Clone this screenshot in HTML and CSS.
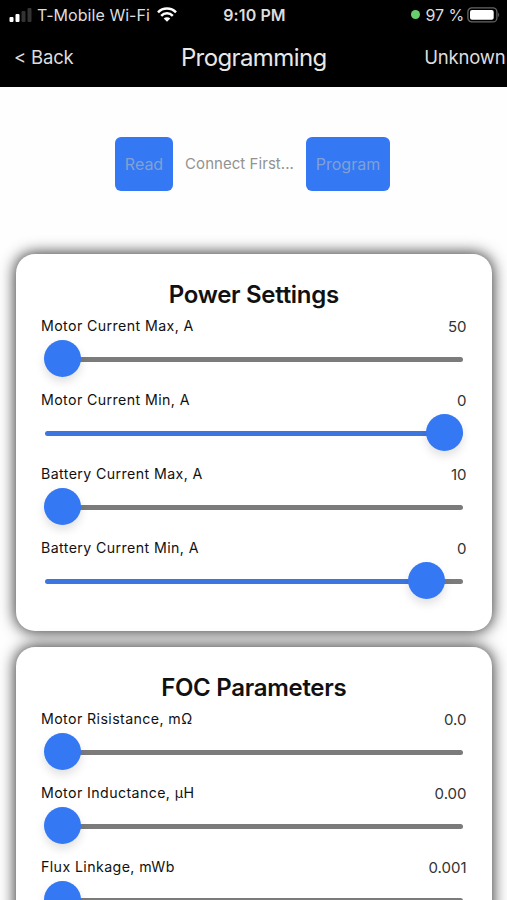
FILE: index.html
```html
<!DOCTYPE html>
<html lang="en">
<head>
<meta charset="utf-8">
<title>Programming</title>
<link rel="stylesheet" href="styles.css">
</head>
<body>
<header class="top">
  <div class="status">
    <div class="carrier">
      <svg class="signal" width="24" height="14" viewBox="0 0 24 14"><rect x="0.5" y="9" width="4" height="5" rx="1" fill="#fff"/><rect x="6.5" y="6" width="4" height="8" rx="1" fill="#fff"/><rect x="12.5" y="3" width="4" height="11" rx="1" fill="#333"/><rect x="18.5" y="0" width="4" height="14" rx="1" fill="#333"/></svg>
      <span class="network">T-Mobile Wi-Fi</span>
      <svg class="wifi" width="20" height="15" viewBox="0 0 20 15" fill="none" stroke="#fff" stroke-width="2.5"><path d="M1 5.4a12.6 12.6 0 0 1 18 0"/><path d="M4.2 8.8a8.1 8.1 0 0 1 11.6 0"/><path d="M10 14.8 6.7 11.5a4.7 4.7 0 0 1 6.6 0z" fill="#fff" stroke="none"/></svg>
    </div>
    <div class="clock">9:10 PM</div>
    <div class="power">
      <i class="dot"></i>
      <span class="percent">97 %</span>
      <svg class="battery" width="33" height="16" viewBox="0 0 33 16"><rect x="0.9" y="0.9" width="29" height="14" rx="4" fill="none" stroke="#666" stroke-width="1.3"/><rect x="3" y="3" width="23.7" height="9.8" rx="2" fill="#fff"/><path d="M31.2 5.5q2 2.3 0 4.8z" fill="#666"/></svg>
    </div>
  </div>
  <nav class="nav">
    <span class="back">&lt; Back</span>
    <h1 class="title">Programming</h1>
    <span class="device">Unknown</span>
  </nav>
</header>
<main>
  <div class="actions">
    <button class="btn read">Read</button>
    <span class="hint">Connect First...</span>
    <button class="btn program">Program</button>
  </div>
  <section class="card">
    <h2 class="heading">Power Settings</h2>
    <div class="row"><div class="labels"><span>Motor Current Max, A</span><span class="value">50</span></div><div class="slider"><div class="track"></div><div class="thumb"></div></div></div>
    <div class="row"><div class="labels"><span>Motor Current Min, A</span><span class="value">0</span></div><div class="slider" style="--pos:1"><div class="track"></div><div class="thumb"></div></div></div>
    <div class="row"><div class="labels"><span>Battery Current Max, A</span><span class="value">10</span></div><div class="slider"><div class="track"></div><div class="thumb"></div></div></div>
    <div class="row"><div class="labels"><span>Battery Current Min, A</span><span class="value">0</span></div><div class="slider" style="--pos:.953"><div class="track"></div><div class="thumb"></div></div></div>
  </section>
  <section class="card">
    <h2 class="heading">FOC Parameters</h2>
    <div class="row"><div class="labels"><span>Motor Risistance, mΩ</span><span class="value">0.0</span></div><div class="slider"><div class="track"></div><div class="thumb"></div></div></div>
    <div class="row"><div class="labels"><span>Motor Inductance, µH</span><span class="value">0.00</span></div><div class="slider"><div class="track"></div><div class="thumb"></div></div></div>
    <div class="row"><div class="labels"><span>Flux Linkage, mWb</span><span class="value">0.001</span></div><div class="slider"><div class="track"></div><div class="thumb"></div></div></div>
  </section>
</main>
</body>
</html>
```
FILE: styles.css
```css
* { box-sizing: border-box; }
body {
  margin: 0;
  height: 900px;
  overflow: hidden;
  background: #fefefe;
  color: #111;
  font-family: Inter, "Liberation Sans", sans-serif;
}
.top { height: 87px; background: #000; color: #ddd; }
.status {
  display: grid;
  grid-template-columns: 1fr auto 1fr;
  align-items: center;
  height: 29px;
  padding: 0 7px 0 9px;
  font-size: 16px;
  white-space: nowrap;
}
.carrier, .power { display: flex; align-items: center; }
.power { justify-content: flex-end; }
.network { margin-left: 4px; letter-spacing: .05px; }
.wifi { margin-left: 7px; }
.clock { font-weight: 600; letter-spacing: .1px; }
.dot { width: 9px; height: 9px; border-radius: 50%; background: #68ce6a; margin-right: 6px; }
.percent { letter-spacing: -.1px; }
.battery { margin-left: 3px; }
.nav {
  display: grid;
  grid-template-columns: 1fr auto 1fr;
  align-items: center;
  height: 56px;
  padding: 0 1.5px 0 14px;
  font-size: 18.5px;
}
.back { letter-spacing: -.2px; }
.title { position: relative; left: -6px; margin: 0; font-size: 24px; font-weight: 400; letter-spacing: -.6px; color: #e8e8e8; }
.device { text-align: right; letter-spacing: -.2px; }
main { height: 813px; overflow: hidden; }
.actions {
  display: flex;
  justify-content: center;
  align-items: center;
  height: 54px;
  margin: 50px 2px 63px 0;
  font-size: 15px;
  color: #929292;
}
.btn {
  height: 54px;
  border: 0;
  border-radius: 6px;
  padding: 0;
  background: #3478f4;
  color: #82a0d3;
  font: 400 16px Inter, sans-serif;
  letter-spacing: 0;
}
.read { width: 58px; }
.program { width: 84px; }
.hint { width: 133px; text-align: center; letter-spacing: .05px; padding-bottom: 1px; }
.card {
  height: 377px;
  margin: 0 15px 16px 15.5px;
  padding: 22.5px 25.5px 0;
  border-radius: 19px;
  background: #fff;
  box-shadow: 0 0 15px 1px rgba(0, 0, 0, .8);
}
.heading { margin: 0; height: 36px; line-height: 36px; text-align: center; font-size: 24px; font-weight: 600; letter-spacing: -.3px; }
.row { height: 74.2px; }
.labels { display: flex; justify-content: space-between; height: 26px; line-height: 26px; font-size: 14.2px; letter-spacing: .4px; }
.value { padding-top: 1px; font-size: 15px; letter-spacing: 0; color: #333; }
.slider { --pos: 0; position: relative; height: 37px; margin: 1.2px 3.5px 0 4px; display: flex; align-items: center; }
.track {
  width: 100%;
  height: 5px;
  margin-top: 2px;
  border-radius: 3px;
  background: linear-gradient(to right, #3d76df calc(var(--pos) * (100% - 37px)), #7b7b7b 0);
}
.thumb {
  position: absolute;
  top: 0;
  left: calc((100% - 36px) * var(--pos) - 1px);
  width: 37px;
  height: 37px;
  border-radius: 50%;
  background: #3478f4;
  box-shadow: 0 5px 10px rgba(0, 0, 0, .12);
}
```
